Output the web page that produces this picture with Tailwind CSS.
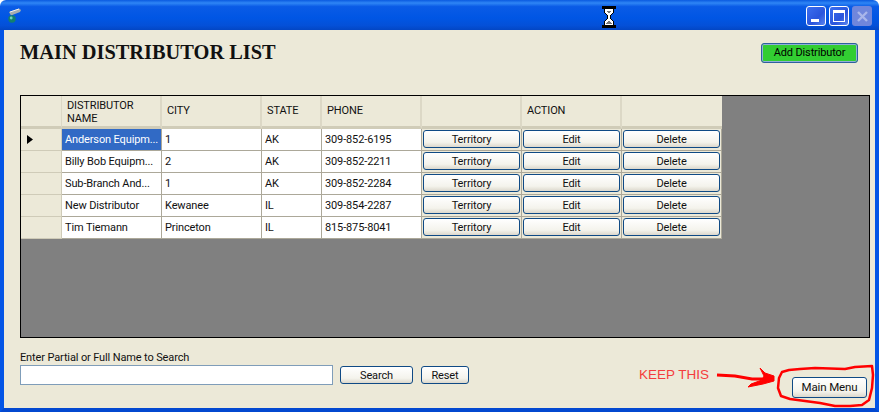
<!doctype html>
<html><head><meta charset="utf-8"><script src="https://cdn.jsdelivr.net/npm/@tailwindcss/browser@4"></script></head>
<body class="m-0 overflow-hidden bg-white">
<div class="relative flex h-[412px] w-[879px] flex-col overflow-hidden font-['Roboto',sans-serif] text-[11px] tracking-[-0.13px] text-[#111]">
  <header class="flex h-[30px] shrink-0 items-start justify-between rounded-t-[6px] bg-[linear-gradient(180deg,#0a5ae0_0%,#2f86f5_10%,#0a5be6_22%,#0056e4_60%,#0450d8_85%,#0346c4_100%)] pl-[8px] pr-[7px] pt-[6px]">
    <svg class="mt-[2px]" width="14" height="16" viewBox="0 0 14 16"><path d="M1 4 L11 0.5 L13 2 L12 4 L3 7.5 Z" fill="#a5adb0"/><path d="M2 4 L11 1" stroke="#f2f2f2" stroke-width="1"/><circle cx="4" cy="11" r="3.7" fill="#12806e"/><circle cx="3.2" cy="10" r="1.4" fill="#6fd0bc"/></svg>
    <div class="flex gap-[3px]">
      <div class="flex h-[20px] w-[20px] items-end rounded-[3px] border border-white bg-[linear-gradient(135deg,#3c6ff0,#2a55dc_60%,#5a86f0)] pb-[3px] pl-[4px]"><div class="h-[3px] w-[8px] bg-white"></div></div>
      <div class="flex h-[20px] w-[20px] items-center justify-center rounded-[3px] border border-white bg-[linear-gradient(135deg,#3c6ff0,#2a55dc_60%,#5a86f0)]"><div class="h-[12px] w-[12px] border border-t-[3px] border-white"></div></div>
      <div class="flex h-[20px] w-[20px] items-center justify-center rounded-[3px] bg-[#6f86dc]"><svg width="13" height="13" viewBox="0 0 13 13"><path d="M2 2 L11 11 M11 2 L2 11" stroke="#a9b6ea" stroke-width="2.4"/></svg></div>
    </div>
  </header>
  <main class="flex min-h-0 flex-1 flex-col border-x-4 border-b-4 border-x-[#0355e6] border-b-[#0348d0] bg-[#ece9d8] pl-[16px] pr-[5px]">
    <div class="flex h-[65px] shrink-0 items-start justify-between">
      <h1 class="mt-[9px] font-['Liberation_Serif',serif] text-[20.4px] leading-[26px] font-bold tracking-normal text-[#111]">MAIN DISTRIBUTOR LIST</h1>
      <button class="mt-[13px] mr-[12px] h-[20px] w-[97px] rounded-[3px] border border-[#2f5f9e] bg-[#32cd32] pt-[1px] shadow-[inset_0_0_0_1px_#8fb0d8] text-black">Add Distributor</button>
    </div>
    <section class="flex h-[243px] shrink-0 flex-col items-start border border-black bg-[#808080]">
      <div class="grid w-[701px] grid-cols-[41px_100px_100px_60px_100px_100px_100px_100px] whitespace-nowrap bg-[#ece9d8]">
        <div class="h-[33px] border-b-[3px] border-r border-b-[#d0ccb8] border-r-[#dcd8c6]"></div>
        <div class="flex h-[33px] items-center border-b-[3px] border-r-2 border-b-[#d0ccb8] border-r-[#dcd8c6] pl-[5px] pt-[1px] leading-[13px]">DISTRIBUTOR<br>NAME</div>
        <div class="flex h-[33px] items-center border-b-[3px] border-r-2 border-b-[#d0ccb8] border-r-[#dcd8c6] pl-[5px] pt-[1px]">CITY</div>
        <div class="flex h-[33px] items-center border-b-[3px] border-r-2 border-b-[#d0ccb8] border-r-[#dcd8c6] pl-[5px] pt-[1px]">STATE</div>
        <div class="flex h-[33px] items-center border-b-[3px] border-r-2 border-b-[#d0ccb8] border-r-[#dcd8c6] pl-[5px] pt-[1px]">PHONE</div>
        <div class="h-[33px] border-b-[3px] border-r-2 border-b-[#d0ccb8] border-r-[#dcd8c6]"></div>
        <div class="flex h-[33px] items-center border-b-[3px] border-r-2 border-b-[#d0ccb8] border-r-[#dcd8c6] pl-[5px] pt-[1px]">ACTION</div>
        <div class="h-[33px] border-b-[3px] border-b-[#d0ccb8]"></div>

        <div class="flex h-[22px] items-center border-b border-r border-[#cfcbb8] pl-[6px]"><svg width="6" height="9" viewBox="0 0 6 9"><path d="M0 0 L6 4.5 L0 9 Z" fill="#000"/></svg></div>
        <div class="flex h-[22px] items-center border-b border-r border-[#aca899] bg-[#316ac5] pl-[3px] pt-[1px] text-white">Anderson Equipm...</div>
        <div class="flex h-[22px] items-center border-b border-r border-[#aca899] bg-white pl-[3px] pt-[1px]">1</div>
        <div class="flex h-[22px] items-center border-b border-r border-[#aca899] bg-white pl-[3px] pt-[1px]">AK</div>
        <div class="flex h-[22px] items-center border-b border-r border-[#aca899] bg-white pl-[3px] pt-[1px]">309-852-6195</div>
        <div class="h-[22px] border-b border-r border-[#aca899] bg-[#ece9d8] p-[1px_1px_2px_1px]"><button class="h-full w-full rounded-[3px] border border-[#0f4a85] bg-[linear-gradient(180deg,#fff,#f4f3ec_70%,#dcd8cc)] pt-[1px]">Territory</button></div>
        <div class="h-[22px] border-b border-r border-[#aca899] bg-[#ece9d8] p-[1px_1px_2px_1px]"><button class="h-full w-full rounded-[3px] border border-[#0f4a85] bg-[linear-gradient(180deg,#fff,#f4f3ec_70%,#dcd8cc)] pt-[1px]">Edit</button></div>
        <div class="h-[22px] border-b border-r border-[#aca899] bg-[#ece9d8] p-[1px_1px_2px_1px]"><button class="h-full w-full rounded-[3px] border border-[#0f4a85] bg-[linear-gradient(180deg,#fff,#f4f3ec_70%,#dcd8cc)] pt-[1px]">Delete</button></div>

        <div class="h-[22px] border-b border-r border-[#cfcbb8]"></div>
        <div class="flex h-[22px] items-center border-b border-r border-[#aca899] bg-white pl-[3px] pt-[1px]">Billy Bob Equipm...</div>
        <div class="flex h-[22px] items-center border-b border-r border-[#aca899] bg-white pl-[3px] pt-[1px]">2</div>
        <div class="flex h-[22px] items-center border-b border-r border-[#aca899] bg-white pl-[3px] pt-[1px]">AK</div>
        <div class="flex h-[22px] items-center border-b border-r border-[#aca899] bg-white pl-[3px] pt-[1px]">309-852-2211</div>
        <div class="h-[22px] border-b border-r border-[#aca899] bg-[#ece9d8] p-[1px_1px_2px_1px]"><button class="h-full w-full rounded-[3px] border border-[#0f4a85] bg-[linear-gradient(180deg,#fff,#f4f3ec_70%,#dcd8cc)] pt-[1px]">Territory</button></div>
        <div class="h-[22px] border-b border-r border-[#aca899] bg-[#ece9d8] p-[1px_1px_2px_1px]"><button class="h-full w-full rounded-[3px] border border-[#0f4a85] bg-[linear-gradient(180deg,#fff,#f4f3ec_70%,#dcd8cc)] pt-[1px]">Edit</button></div>
        <div class="h-[22px] border-b border-r border-[#aca899] bg-[#ece9d8] p-[1px_1px_2px_1px]"><button class="h-full w-full rounded-[3px] border border-[#0f4a85] bg-[linear-gradient(180deg,#fff,#f4f3ec_70%,#dcd8cc)] pt-[1px]">Delete</button></div>

        <div class="h-[22px] border-b border-r border-[#cfcbb8]"></div>
        <div class="flex h-[22px] items-center border-b border-r border-[#aca899] bg-white pl-[3px] pt-[1px]">Sub-Branch And...</div>
        <div class="flex h-[22px] items-center border-b border-r border-[#aca899] bg-white pl-[3px] pt-[1px]">1</div>
        <div class="flex h-[22px] items-center border-b border-r border-[#aca899] bg-white pl-[3px] pt-[1px]">AK</div>
        <div class="flex h-[22px] items-center border-b border-r border-[#aca899] bg-white pl-[3px] pt-[1px]">309-852-2284</div>
        <div class="h-[22px] border-b border-r border-[#aca899] bg-[#ece9d8] p-[1px_1px_2px_1px]"><button class="h-full w-full rounded-[3px] border border-[#0f4a85] bg-[linear-gradient(180deg,#fff,#f4f3ec_70%,#dcd8cc)] pt-[1px]">Territory</button></div>
        <div class="h-[22px] border-b border-r border-[#aca899] bg-[#ece9d8] p-[1px_1px_2px_1px]"><button class="h-full w-full rounded-[3px] border border-[#0f4a85] bg-[linear-gradient(180deg,#fff,#f4f3ec_70%,#dcd8cc)] pt-[1px]">Edit</button></div>
        <div class="h-[22px] border-b border-r border-[#aca899] bg-[#ece9d8] p-[1px_1px_2px_1px]"><button class="h-full w-full rounded-[3px] border border-[#0f4a85] bg-[linear-gradient(180deg,#fff,#f4f3ec_70%,#dcd8cc)] pt-[1px]">Delete</button></div>

        <div class="h-[22px] border-b border-r border-[#cfcbb8]"></div>
        <div class="flex h-[22px] items-center border-b border-r border-[#aca899] bg-white pl-[3px] pt-[1px]">New Distributor</div>
        <div class="flex h-[22px] items-center border-b border-r border-[#aca899] bg-white pl-[3px] pt-[1px]">Kewanee</div>
        <div class="flex h-[22px] items-center border-b border-r border-[#aca899] bg-white pl-[3px] pt-[1px]">IL</div>
        <div class="flex h-[22px] items-center border-b border-r border-[#aca899] bg-white pl-[3px] pt-[1px]">309-854-2287</div>
        <div class="h-[22px] border-b border-r border-[#aca899] bg-[#ece9d8] p-[1px_1px_2px_1px]"><button class="h-full w-full rounded-[3px] border border-[#0f4a85] bg-[linear-gradient(180deg,#fff,#f4f3ec_70%,#dcd8cc)] pt-[1px]">Territory</button></div>
        <div class="h-[22px] border-b border-r border-[#aca899] bg-[#ece9d8] p-[1px_1px_2px_1px]"><button class="h-full w-full rounded-[3px] border border-[#0f4a85] bg-[linear-gradient(180deg,#fff,#f4f3ec_70%,#dcd8cc)] pt-[1px]">Edit</button></div>
        <div class="h-[22px] border-b border-r border-[#aca899] bg-[#ece9d8] p-[1px_1px_2px_1px]"><button class="h-full w-full rounded-[3px] border border-[#0f4a85] bg-[linear-gradient(180deg,#fff,#f4f3ec_70%,#dcd8cc)] pt-[1px]">Delete</button></div>

        <div class="h-[22px] border-b border-r border-[#cfcbb8]"></div>
        <div class="flex h-[22px] items-center border-b border-r border-[#aca899] bg-white pl-[3px] pt-[1px]">Tim Tiemann</div>
        <div class="flex h-[22px] items-center border-b border-r border-[#aca899] bg-white pl-[3px] pt-[1px]">Princeton</div>
        <div class="flex h-[22px] items-center border-b border-r border-[#aca899] bg-white pl-[3px] pt-[1px]">IL</div>
        <div class="flex h-[22px] items-center border-b border-r border-[#aca899] bg-white pl-[3px] pt-[1px]">815-875-8041</div>
        <div class="h-[22px] border-b border-r border-[#aca899] bg-[#ece9d8] p-[1px_1px_2px_1px]"><button class="h-full w-full rounded-[3px] border border-[#0f4a85] bg-[linear-gradient(180deg,#fff,#f4f3ec_70%,#dcd8cc)] pt-[1px]">Territory</button></div>
        <div class="h-[22px] border-b border-r border-[#aca899] bg-[#ece9d8] p-[1px_1px_2px_1px]"><button class="h-full w-full rounded-[3px] border border-[#0f4a85] bg-[linear-gradient(180deg,#fff,#f4f3ec_70%,#dcd8cc)] pt-[1px]">Edit</button></div>
        <div class="h-[22px] border-b border-r border-[#aca899] bg-[#ece9d8] p-[1px_1px_2px_1px]"><button class="h-full w-full rounded-[3px] border border-[#0f4a85] bg-[linear-gradient(180deg,#fff,#f4f3ec_70%,#dcd8cc)] pt-[1px]">Delete</button></div>
      </div>
    </section>
    <div class="flex flex-1 items-start justify-between">
      <div class="flex flex-col">
        <label class="mt-[13px] h-[14px] leading-[14px]">Enter Partial or Full Name to Search</label>
        <div class="flex items-center">
          <div class="h-[20px] w-[313px] border border-[#7f9db9] bg-white"></div>
          <button class="ml-[7px] h-[18px] w-[73px] rounded-[3px] border border-[#0f4a85] bg-[linear-gradient(180deg,#fff,#f4f3ec_70%,#dcd8cc)] pt-[1px]">Search</button>
          <button class="ml-[8px] h-[18px] w-[48px] rounded-[3px] border border-[#0f4a85] bg-[linear-gradient(180deg,#fff,#f4f3ec_70%,#dcd8cc)] pt-[1px]">Reset</button>
        </div>
      </div>
      <div class="flex items-start">
        <span class="mt-[29px] mr-[83px] font-['Liberation_Sans',sans-serif] text-[13.5px] leading-[15px] tracking-normal text-[#f43c3c]">KEEP THIS</span>
        <button class="mt-[39px] mr-[3px] h-[21px] w-[75px] rounded-[3px] border border-[#0f4a85] bg-[linear-gradient(180deg,#fff,#f4f3ec_70%,#dcd8cc)] text-[11.5px]">Main Menu</button>
      </div>
    </div>
  </main>
  <svg class="pointer-events-none absolute left-0 top-0" width="879" height="412" viewBox="0 0 879 412" fill="none">
    <path d="M717 375 L735 376 L752 379 L768 379" stroke="#ff0000" stroke-width="3"/>
    <path d="M760 368 L765 373 L774 376 L774 381 L763 384 L748 387 L751 384 L762 380 L764 376 Z" fill="#ff0000" stroke="#ff0000"/>
    <path d="M789 370 L782 372 L779 378 L778 388 L781 396 L790 399 L805 401 L820 403 L835 406 L850 406 L862 405 L869 400 L872 388 L873 375 L872 366 L855 367 L845 369 L815 368 L800 369 Z" stroke="#ff0000" stroke-width="2.5" stroke-linejoin="round"/>
  </svg>
  <svg class="pointer-events-none absolute left-[602px] top-[6px]" width="14" height="22" viewBox="0 0 14 22" shape-rendering="crispEdges"><path d="M0 0 H14 V3 H12 V6 L9 10 V12 L12 16 V19 H14 V22 H0 V19 H2 V16 L5 12 V10 L2 6 V3 H0 Z" fill="#000"/><path d="M3 3 H11 V6 L8 10 V12 L11 16 V19 H3 V16 L6 12 V10 L3 6 Z" fill="#fff"/><path d="M5 5 H9 L7 8 Z M7 14 L10 18 H4 Z" fill="#777"/></svg>
</div>
</body></html>
